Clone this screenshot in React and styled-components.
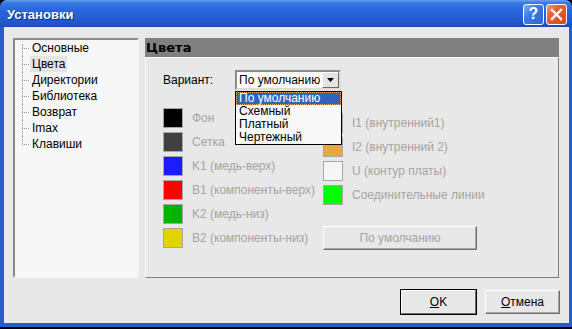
import React from 'react';
import styled, { createGlobalStyle } from 'styled-components';

const Global = createGlobalStyle`
  html, body { margin: 0; padding: 0; background: #000; }
  body {
    width: 572px; height: 329px; overflow: hidden;
    font-family: "Liberation Sans", Arial, sans-serif; font-size: 12px; color: #000;
  }
  * { box-sizing: border-box; }
`;

const Window = styled.div`
  width: 572px; height: 327px;
  display: flex; flex-direction: column;
  border-radius: 7px 7px 0 0; overflow: hidden;
  background: #2a5bcc;
`;

const TitleBar = styled.div`
  height: 27px; flex: none;
  display: flex; align-items: center; gap: 2px;
  padding: 1px 5px 0 7px;
  background: linear-gradient(to bottom, #6aa2f2 0%, #3a7ae6 10%, #2a66dc 35%, #2560d6 60%, #1f54c8 88%, #1c4ab8 100%);
`;

const Title = styled.div`
  flex: 1;
  color: #fff; font-weight: bold; font-size: 13px;
  font-family: "Liberation Sans", Arial, sans-serif;
  text-shadow: 1px 1px 0 #0b2a7a;
`;

const CaptionButton = styled.div`
  width: 21px; height: 21px;
  border: 1px solid #fff; border-radius: 3px;
  display: flex; align-items: center; justify-content: center;
  color: #fff; font-weight: bold; font-size: 16px;
  background: ${p => p.$close
    ? 'linear-gradient(135deg, #f09a7a 0%, #e06436 35%, #d44a1c 100%)'
    : 'linear-gradient(135deg, #7fb0f8 0%, #3b7ae8 40%, #2c62d8 100%)'};
`;

const Frame = styled.div`
  flex: 1;
  display: flex; flex-direction: column;
  background: #e8e8e8;
  border-left: 4px solid #2a5bcc;
  border-right: 3px solid #2a5bcc;
  border-bottom: 4px solid #2a5bcc;
  padding: 11px 9px 9px 9px;
`;

const TopRow = styled.div`
  height: 240px; margin-right: 1px;
  display: flex; gap: 6px;
`;

const Tree = styled.div`
  width: 126px; flex: none;
  background: #f7f7f7;
  border-style: solid; border-width: 2px;
  border-color: #8a8a8a #f4f4f4 #f4f4f4 #8a8a8a;
  padding: 0 0 0 7px;
`;

const TreeItem = styled.div`
  position: relative; height: 16px;
  display: flex; align-items: center;
  padding-left: 8px;
  &::before {
    content: ''; position: absolute; left: 0; top: 8px; width: 7px;
    border-top: 1px dotted #9a9a9a;
  }
  &::after {
    content: ''; position: absolute; left: 0;
    top: ${p => (p.$first ? '4px' : '0')};
    bottom: ${p => (p.$last ? '8px' : '0')};
    border-left: 1px dotted #9a9a9a;
  }
`;

const TreeLabel = styled.span`
  padding: 1px 2px;
  background: ${p => (p.$selected ? '#e4e4e4' : 'transparent')};
`;

const RightCol = styled.div`
  flex: 1;
  display: flex; flex-direction: column;
`;

const Header = styled.div`
  height: 19px; flex: none;
  background: #808080;
  font-weight: bold; font-size: 13px;
  font-family: "DejaVu Sans", "Liberation Sans", sans-serif;
  padding-left: 1px;
  display: flex; align-items: center;
`;

const Panel = styled.div`
  flex: 1;
  position: relative;
  border-style: solid; border-width: 1px;
  border-color: #fbfbfb #7c7c7c #7c7c7c #fbfbfb;
  padding: 12px 0 0 17px;
`;

const VariantRow = styled.div`
  display: flex; align-items: center;
  height: 20px;
`;

const VariantLabel = styled.div`
  width: 72px;
`;

const Select = styled.div`
  position: relative;
  width: 106px; height: 20px;
  background: #fff;
  border-style: solid; border-width: 2px;
  border-color: #8a8a8a #dcdcdc #dcdcdc #8a8a8a;
  display: flex; align-items: center;
  padding-left: 2px;
`;

const SelectText = styled.div`
  flex: 1;
`;

const ArrowButton = styled.div`
  width: 17px; height: 16px; flex: none;
  background: #e4e4e4;
  border-style: solid; border-width: 1px;
  border-color: #ffffff #6a6a6a #6a6a6a #ffffff;
  display: flex; align-items: center; justify-content: center;
`;

const DropList = styled.div`
  position: absolute; left: -2px; top: 19px;
  width: 107px; height: 54px;
  background: #f8f8f8;
  border: 1px solid #000;
  z-index: 5;
`;

const DropItem = styled.div`
  height: 13px; line-height: 13px;
  padding-left: 3px;
  ${p => p.$active && `
    background: #3162bf; color: #fff;
    outline: 1px dotted #e8b050; outline-offset: -1px;
  `}
`;

const Swatches = styled.div`
  margin-top: 18px;
  display: grid; grid-template-columns: 160px 1fr;
`;

const SwatchCol = styled.div`
  display: flex; flex-direction: column; gap: 4px;
  margin-top: ${p => p.$offset || 0}px;
`;

const SwatchRow = styled.div`
  display: flex; align-items: center; gap: 9px;
  height: 20px;
`;

const Swatch = styled.div`
  width: 20px; height: 20px; flex: none;
  background: ${p => p.$color};
  border: 1px solid #a6a6a6;
`;

const SwatchLabel = styled.div`
  color: #a4a4a4; white-space: nowrap;
`;

const PushButton = styled.div`
  width: ${p => p.$w || 75}px; height: 24px;
  display: flex; align-items: center; justify-content: center;
  background: #e8e8e8;
  color: ${p => (p.$disabled ? '#a4a4a4' : '#000')};
  border-style: solid; border-width: 1px;
  border-color: #ffffff #6e6e6e #6e6e6e #ffffff;
  box-shadow: ${p => (p.$default ? '0 0 0 1px #000' : 'inset -1px -1px 0 #a8a8a8')};
  margin-top: ${p => p.$mt || 0}px;
`;

const ButtonRow = styled.div`
  margin-top: 12px;
  display: flex; justify-content: flex-end; gap: 9px;
`;

const treeItems = ['Основные', 'Цвета', 'Директории', 'Библиотека', 'Возврат', 'Imax', 'Клавиши'];

const leftColors = [
  ['#000000', 'Фон'],
  ['#404040', 'Сетка'],
  ['#1c1cff', 'K1 (медь-верх)'],
  ['#ff0000', 'B1 (компоненты-верх)'],
  ['#00b400', 'K2 (медь-низ)'],
  ['#e2d200', 'B2 (компоненты-низ)'],
];

const rightColors = [
  ['#dc6410', 'I1 (внутренний1)'],
  ['#e6a840', 'I2 (внутренний 2)'],
  ['#f6f6f6', 'U (контур платы)'],
  ['#00ff00', 'Соединительные линии'],
];

export default function App() {
  return (
    <>
      <Global />
      <Window>
        <TitleBar>
          <Title>Установки</Title>
          <CaptionButton>?</CaptionButton>
          <CaptionButton $close>
            <svg width="13" height="13" viewBox="0 0 13 13">
              <path d="M2 2 L11 11 M11 2 L2 11" stroke="#fff" strokeWidth="2.4" strokeLinecap="square" />
            </svg>
          </CaptionButton>
        </TitleBar>
        <Frame>
          <TopRow>
            <Tree>
              {treeItems.map((t, i) => (
                <TreeItem key={t} $first={i === 0} $last={i === treeItems.length - 1}>
                  <TreeLabel $selected={t === 'Цвета'}>{t}</TreeLabel>
                </TreeItem>
              ))}
            </Tree>
            <RightCol>
              <Header>Цвета</Header>
              <Panel>
                <VariantRow>
                  <VariantLabel>Вариант:</VariantLabel>
                  <Select>
                    <SelectText>По умолчанию</SelectText>
                    <ArrowButton>
                      <svg width="7" height="4" viewBox="0 0 7 4">
                        <path d="M0 0 H7 L3.5 4 Z" fill="#000" />
                      </svg>
                    </ArrowButton>
                    <DropList>
                      <DropItem $active>По умолчанию</DropItem>
                      <DropItem>Схемный</DropItem>
                      <DropItem>Платный</DropItem>
                      <DropItem>Чертежный</DropItem>
                    </DropList>
                  </Select>
                </VariantRow>
                <Swatches>
                  <SwatchCol>
                    {leftColors.map(([c, l]) => (
                      <SwatchRow key={l}>
                        <Swatch $color={c} />
                        <SwatchLabel>{l}</SwatchLabel>
                      </SwatchRow>
                    ))}
                  </SwatchCol>
                  <SwatchCol $offset={5}>
                    {rightColors.map(([c, l]) => (
                      <SwatchRow key={l}>
                        <Swatch $color={c} />
                        <SwatchLabel>{l}</SwatchLabel>
                      </SwatchRow>
                    ))}
                    <PushButton $w={154} $disabled $mt={17}>По умолчанию</PushButton>
                  </SwatchCol>
                </Swatches>
              </Panel>
            </RightCol>
          </TopRow>
          <ButtonRow>
            <PushButton $default><span><u>O</u>K</span></PushButton>
            <PushButton><span><u>О</u>тмена</span></PushButton>
          </ButtonRow>
        </Frame>
      </Window>
    </>
  );
}
